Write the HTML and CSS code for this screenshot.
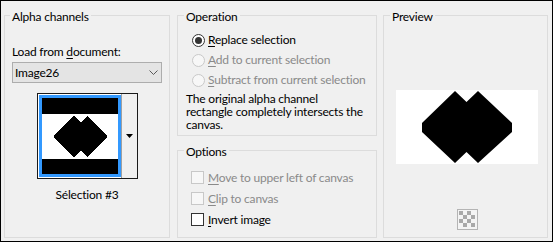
FILE: index.html
```html
<!DOCTYPE html>
<html>
<head>
<meta charset="utf-8">
<link rel="stylesheet" href="styles.css">
</head>
<body>
<div class="dlg">
  <div class="group alpha">
    <span class="legend">Alpha channels</span>
    <div class="lbl">Load from <u>d</u>ocument:</div>
    <div class="combo">
      <span>Image26</span>
      <svg class="chev" width="9" height="5" viewBox="0 0 9 5"><polyline points="0.5,0.5 4.5,4.5 8.5,0.5" fill="none" stroke="#5a5a5a" stroke-width="1"/></svg>
    </div>
    <div class="thumbctl">
      <div class="thumb">
        <svg width="76" height="76" viewBox="0 0 76 76" shape-rendering="crispEdges">
          <rect x="0" y="0" width="76" height="76" fill="#fff"/>
          <rect x="0" y="0" width="76" height="16" fill="#000"/>
          <rect x="0" y="61" width="76" height="15" fill="#000"/>
          <polygon points="12,37 32,18 38.5,24.5 45,18 65,37 65,40 45,59 38.5,52.5 32,59 12,40" fill="#000"/>
        </svg>
      </div>
      <div class="dropbtn">
        <svg width="7" height="4" viewBox="0 0 7 4"><polygon points="0,0 7,0 3.5,4" fill="#000"/></svg>
      </div>
    </div>
    <div class="caption">Sélection #3</div>
  </div>

  <div class="mid">
    <div class="group op">
      <span class="legend">Operation</span>
      <div class="radios">
        <div class="row">
          <svg class="radio" width="13" height="13" viewBox="0 0 13 13"><circle cx="6.5" cy="6.5" r="6" fill="#fff" stroke="#333"/><circle cx="6.5" cy="6.5" r="3.5" fill="#333"/></svg>
          <span><u>R</u>eplace selection</span>
        </div>
        <div class="row dis">
          <svg class="radio" width="13" height="13" viewBox="0 0 13 13"><circle cx="6.5" cy="6.5" r="6" fill="#f7f7f7" stroke="#c8c8c8"/></svg>
          <span><u>A</u>dd to current selection</span>
        </div>
        <div class="row dis">
          <svg class="radio" width="13" height="13" viewBox="0 0 13 13"><circle cx="6.5" cy="6.5" r="6" fill="#f7f7f7" stroke="#c8c8c8"/></svg>
          <span><u>S</u>ubtract from current selection</span>
        </div>
      </div>
      <p class="info">The original alpha channel<br>rectangle completely intersects the<br>canvas.</p>
    </div>

    <div class="group opts">
      <span class="legend">Options</span>
      <div class="checks">
        <div class="crow dis"><span class="cb"></span><span><u>M</u>ove to upper left of canvas</span></div>
        <div class="crow dis"><span class="cb"></span><span><u>C</u>lip to canvas</span></div>
        <div class="crow"><span class="cb"></span><span><u>I</u>nvert image</span></div>
      </div>
    </div>
  </div>

  <div class="group preview">
    <span class="legend">Preview</span>
    <div class="pv">
      <svg width="142" height="74" viewBox="0 0 142 74">
        <polygon points="26,33 59,1 70.5,12 82,1 116,33 116,42 82,73 70.5,62 59,73 26,42" fill="#000"/>
      </svg>
    </div>
    <div class="checker">
      <svg width="21" height="21" viewBox="0 0 21 21" shape-rendering="crispEdges">
        <rect x="0.5" y="0.5" width="20" height="20" fill="#f4f4f4" stroke="#b4b4b4"/>
        <rect x="2" y="2" width="4" height="4" fill="#a9a9a9"/>
        <rect x="10" y="2" width="4" height="4" fill="#a9a9a9"/>
        <rect x="6" y="6" width="4" height="4" fill="#a9a9a9"/>
        <rect x="14" y="6" width="4" height="4" fill="#a9a9a9"/>
        <rect x="2" y="10" width="4" height="4" fill="#a9a9a9"/>
        <rect x="10" y="10" width="4" height="4" fill="#a9a9a9"/>
        <rect x="6" y="14" width="4" height="4" fill="#a9a9a9"/>
        <rect x="14" y="14" width="4" height="4" fill="#a9a9a9"/>
      </svg>
    </div>
  </div>
</div>
</body>
</html>
```

FILE: styles.css
```css
* { box-sizing: border-box; }
html, body { margin: 0; padding: 0; }
body {
  width: 553px;
  height: 242px;
  background: #f0f0f0;
  font-family: Lato, "Noto Sans", "Liberation Sans", sans-serif;
  font-size: 12px;
  letter-spacing: -0.2px;
  color: #000;
}
u { text-decoration: underline; text-underline-offset: 2px; }

.dlg {
  width: 553px;
  height: 242px;
  border: 1px solid #000;
  background: #f0f0f0;
  padding: 14px 4px 3px 3px;
  display: flex;
}

.group {
  position: relative;
  border: 1px solid #dcdcdc;
}
.legend {
  position: absolute;
  top: -7px;
  left: 6px;
  padding: 0 2px;
  line-height: 15px;
  background: #f0f0f0;
  white-space: nowrap;
}

/* Alpha channels */
.alpha {
  width: 166px;
  height: 223px;
}
.alpha .legend { left: 5px; }
.lbl {
  margin-top: 28px;
  padding-left: 7px;
  line-height: 15px;
}
.combo {
  margin: 3px 0 0 7px;
  width: 150px;
  height: 21px;
  border: 1px solid #adadad;
  background: #e4e4e4;
  padding: 0 3px 0 2px;
  line-height: 19px;
  display: flex;
  align-items: center;
  justify-content: space-between;
}
.chev { display: block; }
.thumbctl {
  margin: 10px 0 0 32px;
  width: 101px;
  height: 86px;
  border: 1px solid #1a1a1a;
  background: #fff;
  display: flex;
}
.thumb {
  margin: 1px 0 1px 1px;
  width: 82px;
  height: 82px;
  border: 3px solid #3399ff;
}
.thumb svg { display: block; }
.dropbtn {
  width: 16px;
  height: 84px;
  background: #f0f0f0;
  border-left: 1px solid #a0a0a0;
  display: flex;
  align-items: center;
  justify-content: center;
}
.dropbtn svg { display: block; }
.caption {
  margin-top: 8px;
  text-align: center;
  line-height: 15px;
}

/* middle column */
.mid {
  margin-left: 7px;
  width: 200px;
  display: flex;
  flex-direction: column;
}
.op { height: 121px; }
.opts { height: 88px; margin-top: 14px; }

.radios { margin-top: 14px; padding-left: 14px; }
.row {
  height: 20px;
  line-height: 20px;
  display: flex;
  align-items: center;
  white-space: nowrap;
}
.radio { display: block; margin-right: 3px; flex: none; }
.dis { color: #8a8a8a; }

.info {
  margin: 2px 0 0 0;
  padding-left: 8px;
  line-height: 13px;
  white-space: nowrap;
}

.checks { margin-top: 16px; padding-left: 13px; }
.crow {
  height: 21px;
  line-height: 21px;
  display: flex;
  align-items: center;
  white-space: nowrap;
}
.cb {
  width: 13px;
  height: 13px;
  border: 1px solid #333;
  background: #fff;
  margin-right: 4px;
  flex: none;
}
.crow.dis .cb {
  border-color: #c8c8c8;
  background: #f7f7f7;
}

/* preview */
.preview {
  margin-left: 6px;
  width: 165px;
  height: 223px;
}
.pv {
  margin: 74px 0 0 12px;
  width: 142px;
  height: 74px;
  background: #fff;
}
.pv svg { display: block; }
.checker {
  margin: 45px 0 0 73px;
  width: 21px;
  height: 21px;
}
.checker svg { display: block; }
```
